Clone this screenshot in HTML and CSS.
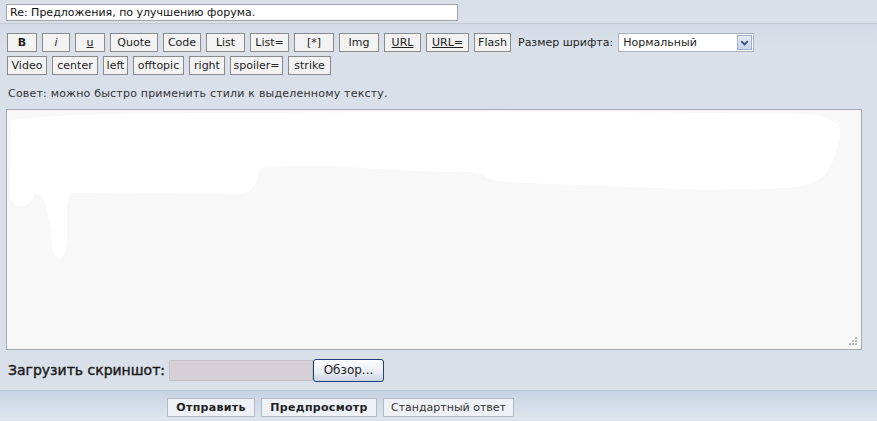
FILE: index.html
```
<!DOCTYPE html>
<html lang="ru">
<head>
    <meta charset="UTF-8">
    <title>Ответ</title>
    <link rel="stylesheet" href="styles.css">
</head>
<body>

<div class="subject-row">
    <input type="text" class="subject" value="Re: Предложения, по улучшению форума.">
</div>

<div class="editor">
    <div class="bbcodes">
        <button class="bb w30"><b>B</b></button>
        <button class="bb w28"><i>i</i></button>
        <button class="bb w30"><u>u</u></button>
        <button class="bb w48">Quote</button>
        <button class="bb w38">Code</button>
        <button class="bb w39">List</button>
        <button class="bb w39">List=</button>
        <button class="bb w40">[*]</button>
        <button class="bb w40">Img</button>
        <button class="bb w37"><u>URL</u></button>
        <button class="bb w43"><u>URL=</u></button>
        <button class="bb w37">Flash</button>
        <span class="label">Размер шрифта:</span>
        <div class="size-select">
            <span>Нормальный</span>
            <span class="arrow">
                <svg width="14" height="14" viewBox="0 0 14 14"><path d="M3.5 5 L7 8.5 L10.5 5" fill="none" stroke="#3a4f7a" stroke-width="2"/></svg>
            </span>
        </div>
    </div>
    <div class="bbcodes">
        <button class="bb w40">Video</button>
        <button class="bb w46">center</button>
        <button class="bb w25">left</button>
        <button class="bb w51">offtopic</button>
        <button class="bb w36">right</button>
        <button class="bb w53">spoiler=</button>
        <button class="bb w43">strike</button>
    </div>

    <div class="tip">Совет: можно быстро применить стили к выделенному тексту.</div>

    <div class="message">
        <textarea></textarea>
        <svg class="smudge" width="855" height="240" viewBox="0 0 855 240">
            <path d="M4 10 Q60 2 250 3 Q520 0 800 4 Q840 8 832 30 Q828 50 820 62 Q810 76 780 78 L700 80 Q600 76 520 73 Q490 72 480 68 Q470 60 440 62 Q380 60 330 56 Q250 55 252 60 Q250 80 236 84 L64 83 Q62 84 60 96 L60 130 Q58 150 52 148 Q45 150 44 120 L40 100 Q38 84 28 84 Q24 96 15 96 Q4 96 3 86 Z" fill="#fff"/>
        </svg>
        <svg class="grip" width="10" height="10" viewBox="0 0 10 10">
            <rect x="7" y="1" width="2" height="2" fill="#b7bcc2"/>
            <rect x="4" y="4" width="2" height="2" fill="#b7bcc2"/>
            <rect x="7" y="4" width="2" height="2" fill="#b7bcc2"/>
            <rect x="1" y="7" width="2" height="2" fill="#b7bcc2"/>
            <rect x="4" y="7" width="2" height="2" fill="#b7bcc2"/>
            <rect x="7" y="7" width="2" height="2" fill="#b7bcc2"/>
        </svg>
    </div>

    <div class="upload">
        <span class="upload-label">Загрузить скриншот:</span>
        <span class="file-field"></span>
        <button class="browse">Обзор...</button>
    </div>
</div>

<div class="actions">
    <button class="act strong w88">Отправить</button>
    <button class="act strong w116">Предпросмотр</button>
    <button class="act w131">Стандартный ответ</button>
</div>

</body>
</html>
```

FILE: styles.css
```
body {
    margin: 0;
    background-color: #d9e0ea;
    font-family: "DejaVu Sans", Verdana, sans-serif;
    font-size: 11px;
    color: #222;
}

.subject-row {
    height: 24px;
    padding: 4px 6px 0;
    box-sizing: border-box;
    border-bottom: 1px solid #c2cad6;
}

.subject {
    width: 452px;
    height: 17px;
    box-sizing: border-box;
    border: 1px solid #9ca3ad;
    background: #fff;
    font-family: "DejaVu Sans", sans-serif;
    font-size: 11px;
    padding: 0 3px;
    color: #111;
}

.editor {
    padding: 8px 6px 0 6px;
    background: linear-gradient(#d2dae5, #d9e0ea 20px);
}

.bbcodes {
    display: flex;
    align-items: center;
    gap: 5px;
    height: 19px;
    margin: 1px 0 4px 1px;
}

.bb {
    height: 19px;
    box-sizing: border-box;
    padding: 0;
    border: 1px solid #8a8a8a;
    background: #f3f3f3;
    font-family: "DejaVu Sans", sans-serif;
    font-size: 11px;
    color: #222;
    cursor: pointer;
}

.w25 { width: 25px; }
.w28 { width: 28px; }
.w30 { width: 30px; }
.w36 { width: 36px; }
.w37 { width: 37px; }
.w38 { width: 38px; }
.w39 { width: 39px; }
.w40 { width: 40px; }
.w43 { width: 43px; }
.w46 { width: 46px; }
.w48 { width: 48px; }
.w51 { width: 51px; }
.w53 { width: 53px; }
.w88 { width: 88px; }
.w116 { width: 116px; }
.w131 { width: 131px; }

.label {
    margin-left: 2px;
    margin-right: 0;
}

.size-select {
    width: 136px;
    height: 19px;
    box-sizing: border-box;
    border: 1px solid #a8b2c0;
    background: #fff;
    display: flex;
    align-items: center;
    justify-content: space-between;
    padding: 0 1px 0 4px;
    font-size: 11px;
}

.size-select .arrow {
    width: 15px;
    height: 15px;
    box-sizing: border-box;
    border: 1px solid #9fb0cc;
    background: linear-gradient(#e4ecf8, #c4d2ea);
    display: flex;
    align-items: center;
    justify-content: center;
}

.tip {
    margin: 12px 0 9px 2px;
    color: #333;
    letter-spacing: 0.2px;
}

.message {
    position: relative;
    width: 856px;
    height: 241px;
}

.message textarea {
    width: 100%;
    height: 100%;
    box-sizing: border-box;
    border: 1px solid #a3abb6;
    background: #f8f8f8;
    resize: none;
    display: block;
}

.smudge {
    position: absolute;
    left: 1px;
    top: 1px;
    pointer-events: none;
}

.grip {
    position: absolute;
    right: 4px;
    bottom: 4px;
}

.upload {
    display: flex;
    align-items: center;
    height: 40px;
    padding-left: 2px;
}

.upload-label {
    font-size: 14px;
    -webkit-text-stroke: 0.4px #1a1a1a;
    color: #1a1a1a;
    width: 161px;
}

.file-field {
    width: 144px;
    height: 21px;
    background: #d4d0d5;
    border: 1px solid #c4c0c6;
    box-sizing: border-box;
}

.browse {
    width: 71px;
    height: 23px;
    box-sizing: border-box;
    border: 1px solid #1f3f7a;
    border-radius: 3px;
    background: linear-gradient(#fdfdfd, #e8ecf3 60%, #c9d3e4);
    font-family: "DejaVu Sans", sans-serif;
    font-size: 12px;
    color: #222;
    padding: 0;
}

.actions {
    border-top: 1px solid #bcc6d4;
    height: 30px;
    box-sizing: border-box;
    background: linear-gradient(#c7d3e3, #dfe6ef);
    display: flex;
    align-items: center;
    gap: 6px;
    padding: 3px 0 0 167px;
}

.act {
    height: 19px;
    box-sizing: border-box;
    border: 1px solid #b2bac6;
    background: #eef1f5;
    font-family: "DejaVu Sans", sans-serif;
    font-size: 11px;
    color: #333;
    padding: 0;
}

.act.strong {
    font-weight: bold;
    color: #222;
    letter-spacing: 0.3px;
}
```
